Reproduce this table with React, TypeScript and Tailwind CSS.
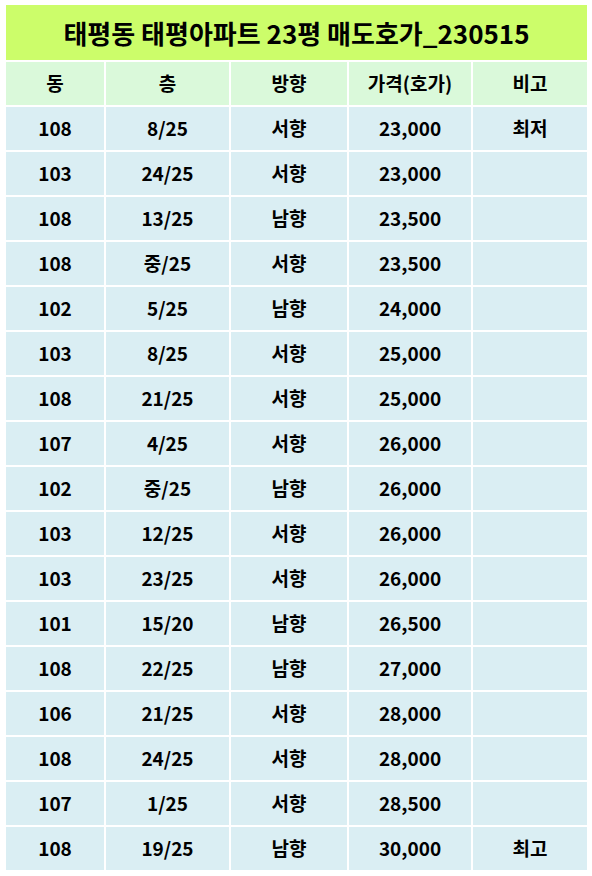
import React from "react";

const rows: string[][] = [
  ["108", "8/25", "서향", "23,000", "최저"],
  ["103", "24/25", "서향", "23,000", ""],
  ["108", "13/25", "남향", "23,500", ""],
  ["108", "중/25", "서향", "23,500", ""],
  ["102", "5/25", "남향", "24,000", ""],
  ["103", "8/25", "서향", "25,000", ""],
  ["108", "21/25", "서향", "25,000", ""],
  ["107", "4/25", "서향", "26,000", ""],
  ["102", "중/25", "남향", "26,000", ""],
  ["103", "12/25", "서향", "26,000", ""],
  ["103", "23/25", "서향", "26,000", ""],
  ["101", "15/20", "남향", "26,500", ""],
  ["108", "22/25", "남향", "27,000", ""],
  ["106", "21/25", "서향", "28,000", ""],
  ["108", "24/25", "서향", "28,000", ""],
  ["107", "1/25", "서향", "28,500", ""],
  ["108", "19/25", "남향", "30,000", "최고"],
];

const headers = ["동", "층", "방향", "가격(호가)", "비고"];

export default function App() {
  return (
    <div
      className="w-[592px] h-[876px] bg-white pt-[5px] pl-[6px]"
      style={{ fontFamily: '"Noto Sans CJK KR", "Noto Sans", sans-serif' }}
    >
      <div className="w-[581px] flex flex-col gap-[2px]">
        <div className="h-[55px] bg-[#ccfd6a] flex items-center justify-center text-[26px] font-bold text-black">
          태평동 태평아파트 23평 매도호가_230515
        </div>
        <div className="grid grid-cols-[98px_123px_116px_122px_114px] gap-[2px] auto-rows-[43px] text-[19px] font-bold text-black">
          {headers.map((h, i) => (
            <div key={"h" + i} className="bg-[#daf9da] flex items-center justify-center">
              {h}
            </div>
          ))}
          {rows.map((r, ri) =>
            r.map((c, ci) => (
              <div key={ri + "-" + ci} className="bg-[#daeef3] flex items-center justify-center">
                {c}
              </div>
            ))
          )}
        </div>
      </div>
    </div>
  );
}
